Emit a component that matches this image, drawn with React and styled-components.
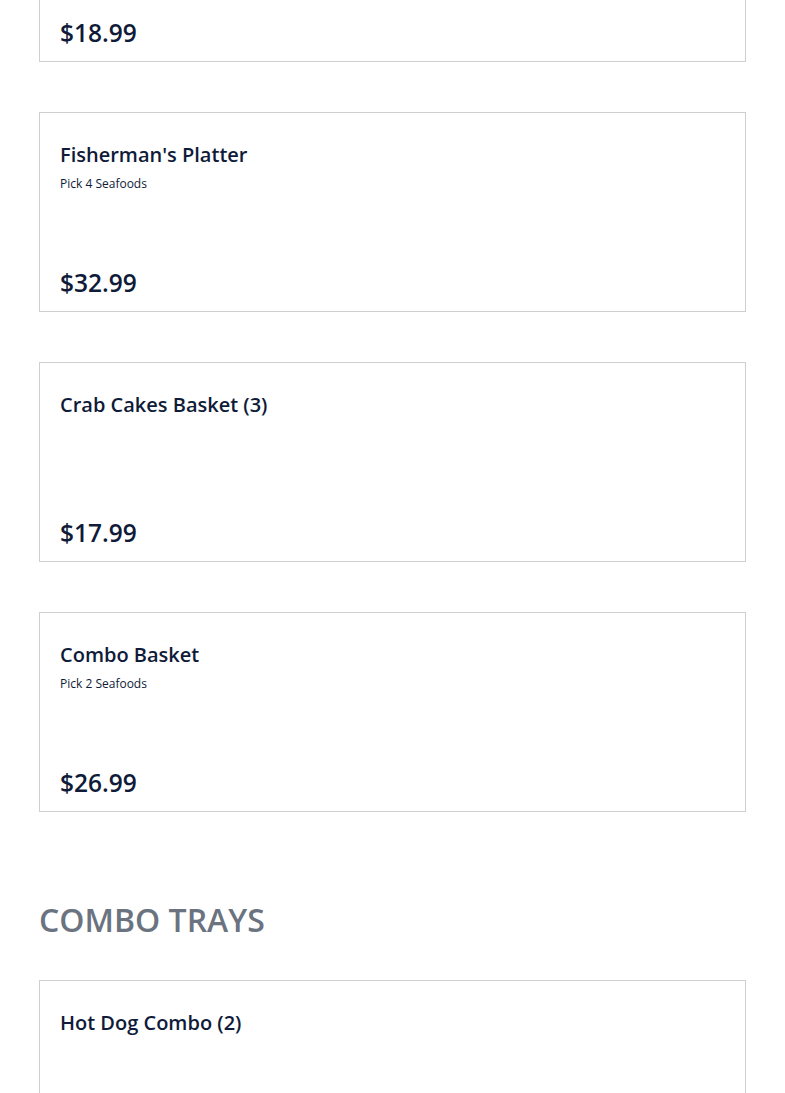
import React from 'react';
import styled, { createGlobalStyle } from 'styled-components';

const GlobalStyle = createGlobalStyle`
  html, body {
    margin: 0;
    padding: 0;
    background: #fff;
  }
  body {
    font-family: 'Open Sans', 'Noto Sans', sans-serif;
    color: #0f1b38;
  }
`;

const seafood = [
  { name: 'Shrimp Basket', note: 'Pick 1 Seafood', price: '$18.99' },
  { name: "Fisherman's Platter", note: 'Pick 4 Seafoods', price: '$32.99' },
  { name: 'Crab Cakes Basket (3)', price: '$17.99' },
  { name: 'Combo Basket', note: 'Pick 2 Seafoods', price: '$26.99' },
];

const trays = [{ name: 'Hot Dog Combo (2)', price: '$14.99' }];

function MenuCard({ item }) {
  return (
    <Card>
      <Title>{item.name}</Title>
      {item.note && <Note>{item.note}</Note>}
      <Price>{item.price}</Price>
    </Card>
  );
}

export default function App() {
  return (
    <>
      <GlobalStyle />
      <Page>
        <CardList>
          {seafood.map((item) => (
            <MenuCard key={item.name} item={item} />
          ))}
        </CardList>
        <Section>
          <SectionTitle>COMBO TRAYS</SectionTitle>
          <CardList>
            {trays.map((item) => (
              <MenuCard key={item.name} item={item} />
            ))}
          </CardList>
        </Section>
      </Page>
    </>
  );
}

const Page = styled.div`
  padding: 0 39px 40px 39px;
  margin-top: -138px;
  display: flex;
  flex-direction: column;
`;

const CardList = styled.div`
  display: flex;
  flex-direction: column;
  gap: 50px;
`;

const Section = styled.section`
  padding-top: 80px;
  display: flex;
  flex-direction: column;
`;

const SectionTitle = styled.h2`
  margin: 0 0 32px;
  font-size: 32px;
  font-weight: 600;
  line-height: 56px;
  color: #6b7380;
`;

const Card = styled.div`
  box-sizing: border-box;
  height: 200px;
  border: 1px solid #cfcfcf;
  padding: 27px 20px 10px;
  display: flex;
  flex-direction: column;
  background: #fff;
`;

const Title = styled.div`
  font-size: 20px;
  font-weight: 600;
  line-height: 30px;
`;

const Note = styled.div`
  font-size: 12px;
  font-weight: 400;
  line-height: 18px;
  margin-top: 5px;
`;

const Price = styled.div`
  margin-top: auto;
  font-size: 24.5px;
  font-weight: 600;
  line-height: 36px;
`;
